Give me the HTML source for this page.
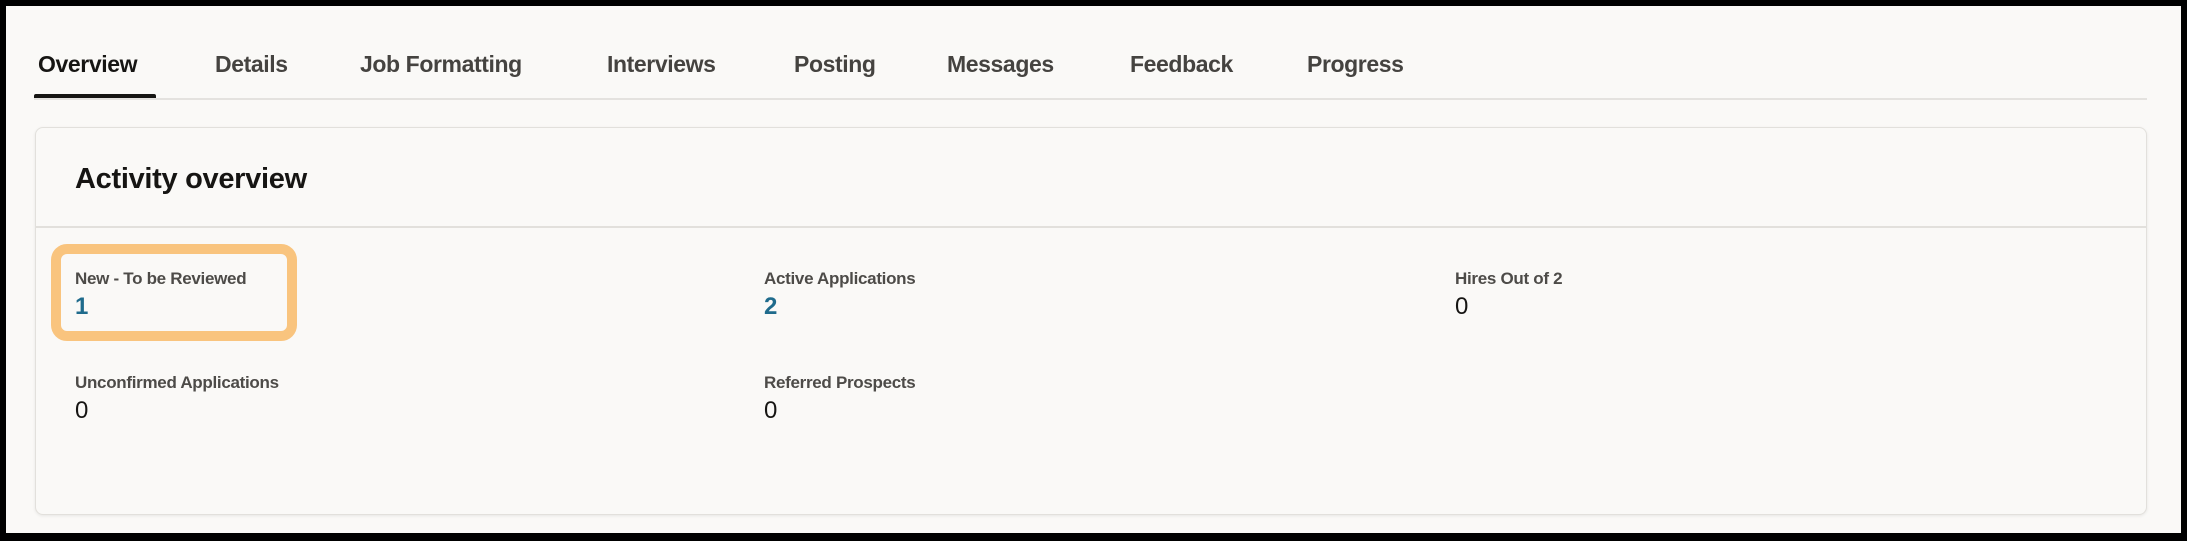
<!DOCTYPE html>
<html><head><style>
body{margin:0;width:2187px;height:541px;overflow:hidden;background:#000;font-family:"Liberation Sans",sans-serif;}
.frame{position:absolute;left:6px;top:6px;width:2175px;height:527px;background:#faf9f7;}
.tab{position:absolute;top:45px;font-size:23px;font-weight:bold;color:#454340;white-space:nowrap;letter-spacing:-0.4px;}
.tabline{position:absolute;left:28px;top:92px;width:2113px;height:2px;background:#e4e2df;}
.ul{position:absolute;left:28px;top:88px;width:122px;height:4px;background:#161513;border-radius:2px 2px 0 0;}
.card{position:absolute;left:29px;top:121px;width:2110px;height:386px;border:1.5px solid #e2e0dc;border-radius:8px;box-shadow:0 1px 3px rgba(0,0,0,0.08);background:#faf9f7;}
.hd{position:absolute;left:69px;top:157px;font-size:29px;font-weight:bold;color:#161513;letter-spacing:-0.3px;}
.hdline{position:absolute;left:30px;top:220px;width:2110px;height:1.5px;background:#e2e0dc;}
.lbl{position:absolute;font-size:17px;font-weight:bold;color:#4d4b48;letter-spacing:-0.3px;white-space:nowrap;}
.val{position:absolute;font-size:24px;color:#161513;}
.link{color:#1f6b8c;font-weight:bold;}
.hl{position:absolute;left:45px;top:238px;width:226px;height:77px;border:10px solid #f9c47e;border-radius:16px;}
</style></head><body>
<div class="frame">
<div class="tab" style="left:32px;color:#161513;">Overview</div>
<div class="tab" style="left:209px">Details</div>
<div class="tab" style="left:354px">Job Formatting</div>
<div class="tab" style="left:601px">Interviews</div>
<div class="tab" style="left:788px">Posting</div>
<div class="tab" style="left:941px">Messages</div>
<div class="tab" style="left:1124px">Feedback</div>
<div class="tab" style="left:1301px">Progress</div>
<div class="tabline"></div><div class="ul"></div>
<div class="card"></div>
<div class="hd">Activity overview</div>
<div class="hdline"></div>
<div class="hl"></div>
<div class="lbl" style="left:69px;top:263px">New - To be Reviewed</div>
<div class="val link" style="left:69px;top:287px">1</div>
<div class="lbl" style="left:758px;top:263px">Active Applications</div>
<div class="val link" style="left:758px;top:287px">2</div>
<div class="lbl" style="left:1449px;top:263px">Hires Out of 2</div>
<div class="val" style="left:1449px;top:287px">0</div>
<div class="lbl" style="left:69px;top:367px">Unconfirmed Applications</div>
<div class="val" style="left:69px;top:391px">0</div>
<div class="lbl" style="left:758px;top:367px">Referred Prospects</div>
<div class="val" style="left:758px;top:391px">0</div>
</div>
</body></html>
